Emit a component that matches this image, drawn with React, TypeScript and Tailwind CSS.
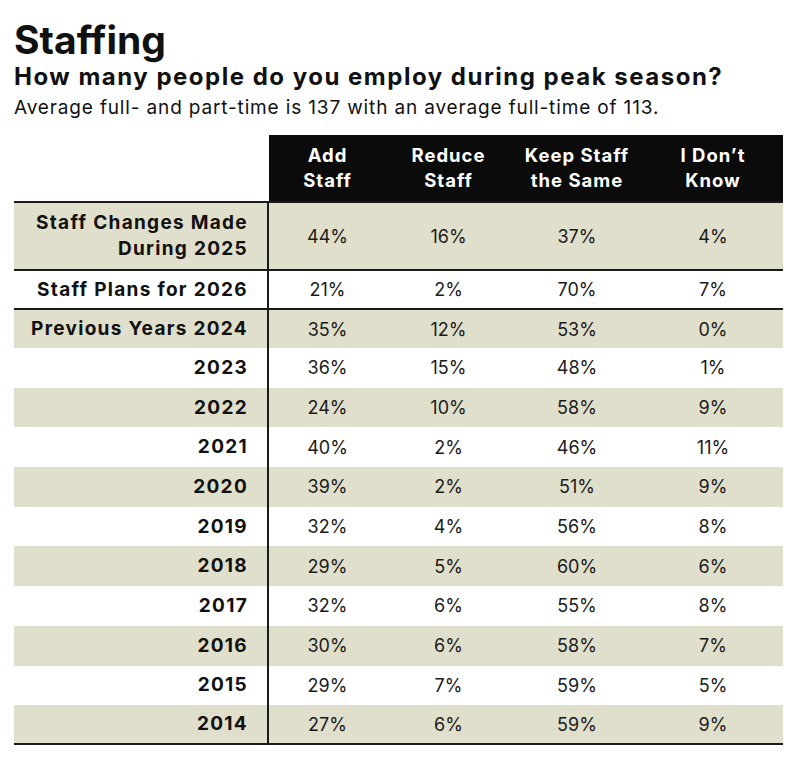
import React from "react";

const font = { fontFamily: "Inter, 'Liberation Sans', sans-serif" };

type Row = { label: string[]; vals: string[]; bg: boolean; line: boolean; h: string };

const years: [string, string[]][] = [
  ["2023", ["36%", "15%", "48%", "1%"]],
  ["2022", ["24%", "10%", "58%", "9%"]],
  ["2021", ["40%", "2%", "46%", "11%"]],
  ["2020", ["39%", "2%", "51%", "9%"]],
  ["2019", ["32%", "4%", "56%", "8%"]],
  ["2018", ["29%", "5%", "60%", "6%"]],
  ["2017", ["32%", "6%", "55%", "8%"]],
  ["2016", ["30%", "6%", "58%", "7%"]],
  ["2015", ["29%", "7%", "59%", "5%"]],
  ["2014", ["27%", "6%", "59%", "9%"]],
];

const rows: Row[] = [
  { label: ["Staff Changes Made", "During 2025"], vals: ["44%", "16%", "37%", "4%"], bg: true, line: true, h: "h-[68px]" },
  { label: ["Staff Plans for 2026"], vals: ["21%", "2%", "70%", "7%"], bg: false, line: true, h: "h-[39px]" },
  { label: ["Previous Years 2024"], vals: ["35%", "12%", "53%", "0%"], bg: true, line: true, h: "h-[40px]" },
  ...years.map(([y, v], i) => ({ label: [y], vals: v, bg: i % 2 === 1, line: false, h: "h-[39.7px]" })),
];

const headers = [
  ["Add", "Staff"],
  ["Reduce", "Staff"],
  ["Keep Staff", "the Same"],
  ["I Don’t", "Know"],
];

export default function App() {
  return (
    <div className="w-[800px] h-[779px] bg-white text-[#111] pl-[14px]" style={font}>
      <div className="pt-[20px] text-[39px] leading-[40px] font-bold">Staffing</div>
      <div className="mt-[4px] text-[24px] leading-[26px] font-bold tracking-[1.5px]">How many people do you employ during peak season?</div>
      <div className="mt-[7px] text-[19px] leading-[22px] tracking-[0.85px]">Average full- and part-time is 137 with an average full-time of 113.</div>
      <div className="mt-[16px] w-[769px]">
        <div className="grid grid-cols-[255px_117px_125px_132px_140px] h-[66px]">
          <div className="bg-white" />
          {headers.map((h, i) => (
            <div key={i} className="bg-[#0b0b0b] text-white font-bold text-[18.5px] leading-[25px] tracking-[1px] flex flex-col items-center justify-center">
              <span>{h[0]}</span>
              <span>{h[1]}</span>
            </div>
          ))}
        </div>
        {rows.map((r, i) => (
          <div
            key={i}
            className={`grid grid-cols-[255px_117px_125px_132px_140px] ${r.h} ${r.bg ? "bg-[#e0dfcb]" : "bg-white"} ${
              i === 0 || r.line ? "border-t-2 border-[#1a1a1a]" : ""
            } ${i === rows.length - 1 ? "border-b-2 border-[#1a1a1a]" : ""}`}
          >
            <div className="border-r-2 border-[#1a1a1a] flex flex-col items-end justify-center pr-[19px] font-bold text-[19px] leading-[26px] tracking-[1.3px]">
              {r.label.map((l, j) => (
                <span key={j}>{l}</span>
              ))}
            </div>
            {r.vals.map((v, j) => (
              <div key={j} className="flex items-center justify-center text-[18px] text-[#1a1a1a]">
                {v}
              </div>
            ))}
          </div>
        ))}
      </div>
    </div>
  );
}
